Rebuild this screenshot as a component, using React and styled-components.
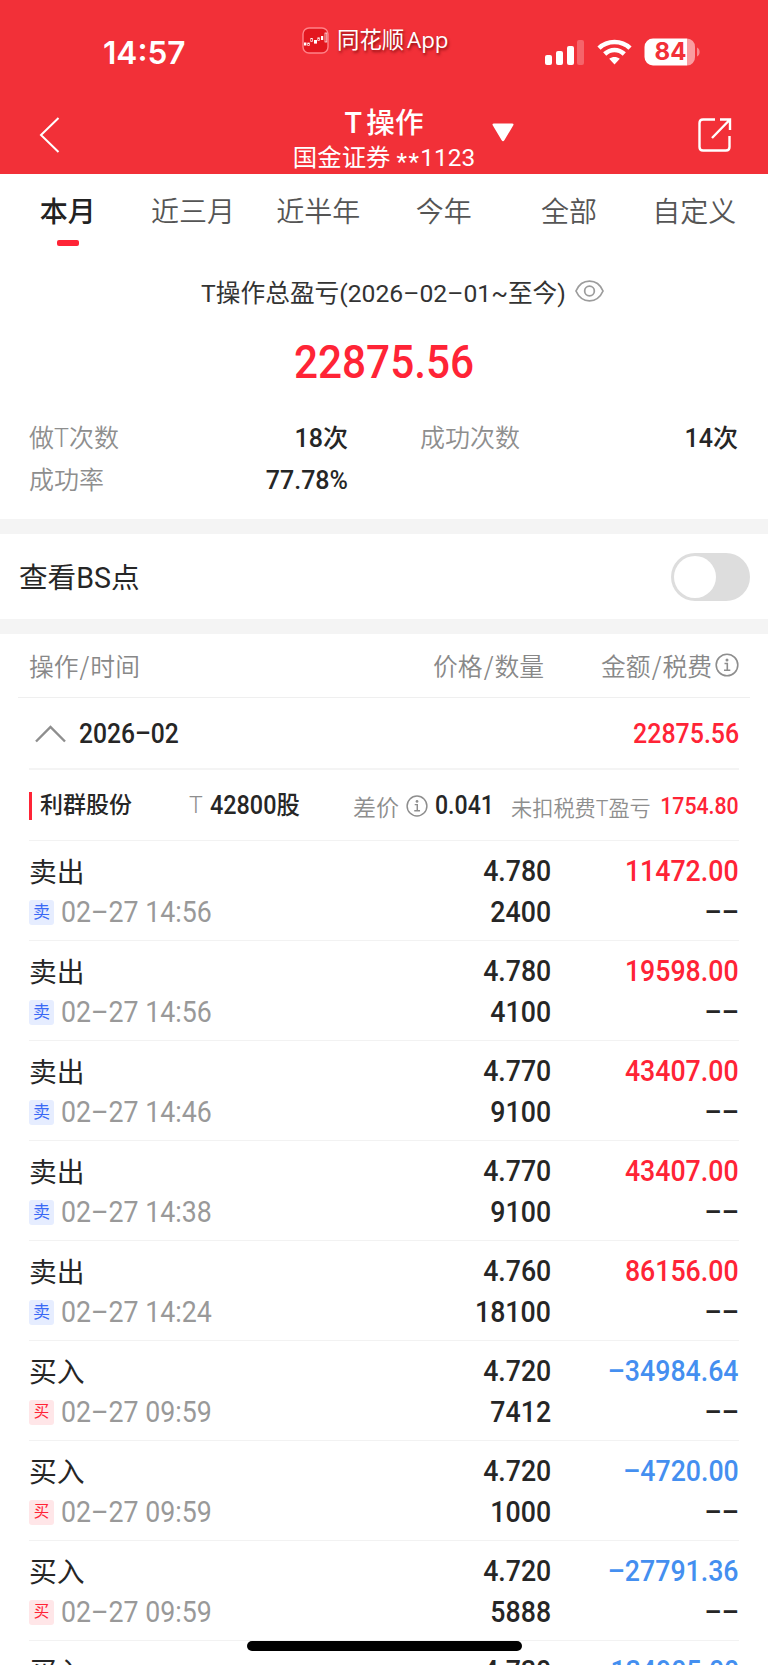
import styled, { createGlobalStyle } from 'styled-components';
import { useState } from 'react';

const GlobalStyle = createGlobalStyle`
    * {
        box-sizing: border-box;
    }
    body {
        margin: 0;
        background: #ffffff;
        color: #262626;
        font-family: Roboto, "Noto Sans CJK SC", sans-serif;
    }
`;

const Page = styled.div`
    width: 768px;
    height: 1665px;
    overflow: hidden;
    position: relative;
    background: #ffffff;
`;

const Header = styled.header`
    height: 174px;
    background: #f23038;
    color: #ffffff;
`;

const StatusBar = styled.div`
    height: 104px;
    display: grid;
    grid-template-columns: 302px 1fr 223px;
    align-items: start;
`;

const Clock = styled.div`
    padding: 34px 0 0 103px;
    font-family: Inter, sans-serif;
    font-weight: 600;
    font-size: 31.6px;
    line-height: 38px;
`;

const AppMark = styled.div`
    display: flex;
    align-items: center;
    gap: 8px;
    padding-top: 25px;
    font-size: 22.4px;
    line-height: 30px;
    white-space: nowrap;
    word-spacing: -3px;
    text-shadow: 1px 2px 3px rgba(90, 0, 0, 0.7);
    font-family: "Open Sans", "Noto Sans CJK SC", sans-serif;
`;

const Signals = styled.div`
    display: flex;
    align-items: center;
    padding-top: 38px;
    height: 66px;
    gap: 12px;
`;

const NavBar = styled.div`
    height: 70px;
    display: grid;
    grid-template-columns: 180px 1fr 180px;
`;

const NavSide = styled.button`
    border: 0;
    background: none;
    padding: ${(p) => (p.$right ? '13px 35px 0 0' : '12px 0 0 38px')};
    display: flex;
    justify-content: ${(p) => (p.$right ? 'flex-end' : 'flex-start')};
`;

const TitleGroup = styled.div`
    display: grid;
    grid-template-columns: 1fr auto 1fr;
    white-space: nowrap;
`;

const Titles = styled.div`
    grid-column: 2;
    text-align: center;
`;

const Title = styled.h1`
    margin: 0;
    padding-top: 1px;
    font-size: 28.6px;
    line-height: 36px;
    font-weight: 500;
    word-spacing: -2px;
`;

const Account = styled.div`
    font-size: 24.4px;
    line-height: 34px;
`;

const Asterisks = styled.span`
    position: relative;
    top: 4px;
    letter-spacing: 1.4px;
`;

const Triangle = styled.svg`
    margin: 19px 0 0 17px;
`;

const Tabs = styled.nav`
    height: 76px;
    display: grid;
    grid-template-columns: repeat(6, 1fr);
    padding: 21px 11px 0 5px;
`;

const Tab = styled.button`
    border: 0;
    background: none;
    padding: 0;
    display: flex;
    flex-direction: column;
    align-items: center;
    font-family: inherit;
    font-size: 28px;
    line-height: 36px;
    white-space: nowrap;
    font-weight: ${(p) => (p.$active ? 500 : 350)};
    color: ${(p) => (p.$active ? '#222222' : '#555555')};
    &::after {
        content: '';
        width: 22px;
        height: 6px;
        border-radius: 2px;
        margin-top: 9px;
        background: ${(p) => (p.$active ? '#ff2436' : 'transparent')};
    }
`;

const Summary = styled.section`
    height: 269px;
    padding-top: 23px;
`;

const SummaryTitle = styled.div`
    display: flex;
    justify-content: center;
    align-items: center;
    gap: 9px;
    height: 36px;
    padding-left: 37px;
    font-size: 24.7px;
    color: #333333;
    white-space: nowrap;
`;

const Total = styled.div`
    margin-top: 23px;
    height: 60px;
    line-height: 60px;
    font-size: 47px;
    font-weight: 500;
    color: #ff2436;
    text-align: center;
    transform: scaleX(0.9);
`;

const Stats = styled.div`
    display: grid;
    grid-template-columns: 319px 318px;
    column-gap: 72px;
    padding: 26px 29px 0;
    line-height: 42px;
    font-size: 25px;
`;

const Stat = styled.div`
    display: flex;
    justify-content: space-between;
`;

const Label = styled.span`
    color: #8e8e8e;
    font-weight: 350;
`;

const Value = styled.span`
    font-weight: 500;
    color: #262626;
`;

const Band = styled.div`
    height: 15px;
    background: #f4f4f4;
`;

const SwitchRow = styled.div`
    height: 85px;
    padding: 0 18px 0 19px;
    display: flex;
    align-items: center;
    justify-content: space-between;
    font-size: 28.6px;
    color: #262626;
`;

const SwitchLabel = styled.span`
    padding-bottom: 3px;
`;

const Toggle = styled.button`
    width: 79px;
    height: 48px;
    padding: 3px;
    border: 0;
    border-radius: 24px;
    display: flex;
    justify-content: ${(p) => (p.$on ? 'flex-end' : 'flex-start')};
    background: ${(p) => (p.$on ? '#ff2436' : '#dddddd')};
    &::after {
        content: '';
        width: 42px;
        height: 42px;
        border-radius: 50%;
        background: #ffffff;
    }
`;

const TableHead = styled.div`
    height: 64px;
    margin: 0 18px;
    padding: 0 11px 2px;
    border-bottom: 1px solid #efefef;
    display: grid;
    grid-template-columns: 1fr 190px 195px;
    align-items: center;
    font-size: 24.8px;
    font-weight: 350;
    color: #888888;
`;

const HeadCell = styled.div`
    display: flex;
    align-items: center;
    gap: 3px;
    justify-content: ${(p) => (p.$right ? 'flex-end' : 'flex-start')};
`;

const Slash = styled.span`
    font-family: "Noto Sans CJK SC", sans-serif;
    margin: 0 1px;
`;

const MonthRow = styled.div`
    height: 72px;
    margin: 0 29px;
    padding: 1px 0 0 6px;
    border-bottom: 2px solid #f4f4f4;
    display: flex;
    align-items: center;
`;

const Digits = styled.span`
    display: inline-block;
    font-size: ${(p) => p.$size || 29.5}px;
    font-weight: ${(p) => p.$weight || 500};
    color: ${(p) => p.$color || '#262626'};
    line-height: 41px;
    white-space: pre;
    transform: scaleX(${(p) => p.$scale || 0.905});
    transform-origin: ${(p) => (p.$left ? 'left' : 'right')} center;
`;

const Month = styled.div`
    flex: 1;
    padding-left: 13px;
`;

const StockRow = styled.div`
    height: 71px;
    margin: 0 29px;
    padding-top: 1px;
    border-bottom: 1px solid #f2f2f2;
    display: grid;
    grid-template-columns: 160px 164px 152px 1fr;
    align-items: center;
    white-space: nowrap;
    font-size: 23px;
`;

const StockName = styled.div`
    height: 28px;
    padding-left: 8px;
    border-left: 3px solid #ff2436;
    line-height: 27px;
    font-weight: 500;
`;

const StockCell = styled.div`
    display: flex;
    align-items: center;
    gap: ${(p) => (p.$right ? 0 : 7)}px;
    justify-content: ${(p) => (p.$right ? 'space-between' : 'flex-start')};
    font-size: ${(p) => (p.$right ? 21.2 : 23)}px;
    padding: ${(p) => (p.$right ? '1px 0 0 6px' : 0)};
`;

const TradeRow = styled.div`
    height: 100px;
    margin: 0 29px;
    padding-top: 10px;
    border-bottom: 1px solid #f2f2f2;
    display: grid;
    grid-template-columns: 1fr 200px 188px;
    grid-template-rows: 41px 41px;
    align-items: center;
    justify-items: end;
`;

const Action = styled.div`
    justify-self: start;
    padding-top: 2px;
    font-size: 27.8px;
    line-height: 36px;
`;

const Time = styled.div`
    justify-self: start;
    display: flex;
    align-items: center;
    gap: 7px;
`;

const Badge = styled.span`
    width: 25px;
    height: 25px;
    border-radius: 3px;
    display: flex;
    align-items: center;
    justify-content: center;
    font-size: ${(p) => (p.$buy ? 15.5 : 17)}px;
    line-height: 25px;
    color: ${(p) => (p.$buy ? '#ff2436' : '#3a69f5')};
    background: ${(p) => (p.$buy ? '#ffe6e8' : '#e6edff')};
`;

const HomeIndicator = styled.div`
    position: absolute;
    left: 247px;
    top: 1641px;
    width: 275px;
    height: 10px;
    border-radius: 5px;
    background: #000000;
`;

const tabs = ['本月', '近三月', '近半年', '今年', '全部', '自定义'];

const trades = [
    { type: '卖', time: '02–27 14:56', price: '4.780', count: '2400', amount: '11472.00' },
    { type: '卖', time: '02–27 14:56', price: '4.780', count: '4100', amount: '19598.00' },
    { type: '卖', time: '02–27 14:46', price: '4.770', count: '9100', amount: '43407.00' },
    { type: '卖', time: '02–27 14:38', price: '4.770', count: '9100', amount: '43407.00' },
    { type: '卖', time: '02–27 14:24', price: '4.760', count: '18100', amount: '86156.00' },
    { type: '买', time: '02–27 09:59', price: '4.720', count: '7412', amount: '–34984.64' },
    { type: '买', time: '02–27 09:59', price: '4.720', count: '1000', amount: '–4720.00' },
    { type: '买', time: '02–27 09:59', price: '4.720', count: '5888', amount: '–27791.36' },
    { type: '买', price: '4.730', amount: '–134905.00' },
];

function InfoIcon({ size }) {
    return (
        <svg width={size} height={size} viewBox="0 0 24 24" fill="none" stroke="#8e8e8e" strokeWidth="1.6">
            <circle cx="12" cy="12" r="10.8" />
            <circle cx="12" cy="7" r="1.5" fill="#8e8e8e" stroke="none" />
            <path d="M9.500 10.500H12.300V17M9 17.200H15.300" />
        </svg>
    );
}

function AppLogo() {
    return (
        <svg width="27" height="27" viewBox="0 0 27 27" fill="none">
            <rect x="1" y="1" width="25" height="25" rx="6" fill="#e3171f" stroke="#ff8288" strokeWidth="1.4" />
            <g fill="#fff">
                <rect x="2" y="15.5" width="2.4" height="3" />
                <rect x="12" y="13" width="3" height="3.6" />
                <rect x="19" y="9" width="2.2" height="4" />
            </g>
            <g stroke="#fff" strokeWidth="0.7">
                <rect x="5.700" y="16" width="1.800" height="2.500" />
                <rect x="8.800" y="11.500" width="1.800" height="3" />
                <rect x="15.800" y="10.800" width="1.800" height="2.600" />
                <rect x="23" y="6" width="1.800" height="9" />
            </g>
        </svg>
    );
}

function StatusIcons() {
    return (
        <Signals>
            <svg width="40" height="26" viewBox="0 0 40 26" fill="#fff">
                <rect x="0" y="16" width="7" height="10" rx="2" />
                <rect x="11" y="12" width="7" height="14" rx="2" />
                <rect x="22" y="7" width="7" height="19" rx="2" />
                <rect x="32" y="1" width="7" height="25" rx="2" opacity="0.25" />
            </svg>
            <svg width="35" height="26" viewBox="0 0 35 26" fill="none" stroke="#fff" strokeWidth="4.600">
                <path d="M2 9.200C10.500 1 24.500 1 33 9.200" />
                <path d="M7.700 15C13.500 9.600 21.500 9.600 27.300 15" />
                <path d="M12.200 19.700C15.500 17.300 19.500 17.300 22.800 19.700L17.500 25.500Z" fill="#fff" stroke="none" />
            </svg>
            <svg width="56" height="28" viewBox="0 0 56 28">
                <path d="M43 0.500A8 8 0 0 1 51 9V19A8 8 0 0 1 43 27.500Z" fill="#fa9ca0" />
                <path d="M9 0.500H43V27.500H9A8.500 8.500 0 0 1 0.500 19V9A8.500 8.500 0 0 1 9 0.500Z" fill="#fff" />
                <path d="M53 9.500C56.500 11 56.500 17 53 18.500Z" fill="#f8888d" />
                <text x="26.500" y="22.300" textAnchor="middle" fontFamily="Inter" fontWeight="700" fontSize="24" fill="#f23038" textLength="32">84</text>
            </svg>
        </Signals>
    );
}

function Trade({ trade }) {
    const buy = trade.type === '买';
    return (
        <TradeRow>
            <Action>{buy ? '买入' : '卖出'}</Action>
            <Digits>{trade.price}</Digits>
            <Digits $color={buy ? '#448ff0' : '#ff2436'}>{trade.amount}</Digits>
            {trade.time && (
                <>
                    <Time>
                        <Badge $buy={buy}>{trade.type}</Badge>
                        <Digits $left $weight={400} $color="#999999">{trade.time}</Digits>
                    </Time>
                    <Digits>{trade.count}</Digits>
                    <Digits>––</Digits>
                </>
            )}
        </TradeRow>
    );
}

function App() {
    const [activeTab, setActiveTab] = useState('本月');
    const [showPoints, setShowPoints] = useState(false);

    return (
        <Page>
            <GlobalStyle />
            <Header>
                <StatusBar>
                    <Clock>14:57</Clock>
                    <AppMark>
                        <AppLogo />
                        <span>同花顺 App</span>
                    </AppMark>
                    <StatusIcons />
                </StatusBar>
                <NavBar>
                    <NavSide aria-label="返回">
                        <svg width="22" height="38" viewBox="0 0 22 38" fill="none" stroke="#fff" strokeWidth="2">
                            <path d="M20.500 2L3 19L20.500 36" />
                        </svg>
                    </NavSide>
                    <TitleGroup>
                        <Titles>
                            <Title>T 操作</Title>
                            <Account>国金证券 <Asterisks>**</Asterisks>1123</Account>
                        </Titles>
                        <Triangle width="22" height="19" viewBox="0 0 22 19" fill="#fff">
                            <path d="M2 0.500H20Q22.500 0.500 21 2.800L12.500 17Q11 19.500 9.500 17L1 2.800Q-0.500 0.500 2 0.500Z" />
                        </Triangle>
                    </TitleGroup>
                    <NavSide $right aria-label="分享">
                        <svg width="36" height="36" viewBox="0 0 36 36" fill="none" stroke="#fff" strokeWidth="2.400">
                            <path d="M18 2.500H6Q2.500 2.500 2.500 6V30Q2.500 33.500 6 33.500H29Q32.500 33.500 32.500 30V19" />
                            <path d="M15 21L32.500 3M23 2.500H33V13" />
                        </svg>
                    </NavSide>
                </NavBar>
            </Header>

            <Tabs>
                {tabs.map((tab) => (
                    <Tab key={tab} $active={tab === activeTab} onClick={() => setActiveTab(tab)}>{tab}</Tab>
                ))}
            </Tabs>

            <Summary>
                <SummaryTitle>
                    <span>T操作总盈亏(2026–02–01~至今)</span>
                    <svg width="29" height="24" viewBox="0 0 30 24" fill="none" stroke="#9c9c9c" strokeWidth="1.800">
                        <path d="M1 12C7 -1.500 23 -1.500 29 12C23 25.500 7 25.500 1 12Z" />
                        <circle cx="15" cy="12" r="5" />
                    </svg>
                </SummaryTitle>
                <Total>22875.56</Total>
                <Stats>
                    <Stat><Label>做T次数</Label><Value>18次</Value></Stat>
                    <Stat><Label>成功次数</Label><Value>14次</Value></Stat>
                    <Stat><Label>成功率</Label><Value>77.78%</Value></Stat>
                </Stats>
            </Summary>

            <Band />
            <SwitchRow>
                <SwitchLabel>查看BS点</SwitchLabel>
                <Toggle $on={showPoints} aria-label="查看BS点" onClick={() => setShowPoints(!showPoints)} />
            </SwitchRow>
            <Band />

            <TableHead>
                <HeadCell><div>操作<Slash>/</Slash>时间</div></HeadCell>
                <HeadCell $right><div>价格<Slash>/</Slash>数量</div></HeadCell>
                <HeadCell $right><div>金额<Slash>/</Slash>税费</div><InfoIcon size={24} /></HeadCell>
            </TableHead>
            <MonthRow>
                <svg width="31" height="18" viewBox="0 0 31 18" fill="none" stroke="#8e8e8e" strokeWidth="2.400">
                    <path d="M1 16.500L15.500 2L30 16.500" />
                </svg>
                <Month><Digits $left $size={28} $scale={0.88}>2026–02</Digits></Month>
                <Digits $size={28} $scale={0.89} $color="#ff2436">22875.56</Digits>
            </MonthRow>
            <StockRow>
                <StockName>利群股份</StockName>
                <StockCell>
                    <Label>T</Label>
                    <Digits $left $size={25} $scale={0.935}>42800股</Digits>
                </StockCell>
                <StockCell>
                    <Label>差价</Label>
                    <InfoIcon size={22} />
                    <Digits $left $size={25.5}>0.041</Digits>
                </StockCell>
                <StockCell $right>
                    <Label>未扣税费T盈亏</Label>
                    <Digits $size={23.5} $color="#ff2436">1754.80</Digits>
                </StockCell>
            </StockRow>
            {trades.map((trade, i) => (
                <Trade key={i} trade={trade} />
            ))}
            <HomeIndicator />
        </Page>
    );
}

export default App;
